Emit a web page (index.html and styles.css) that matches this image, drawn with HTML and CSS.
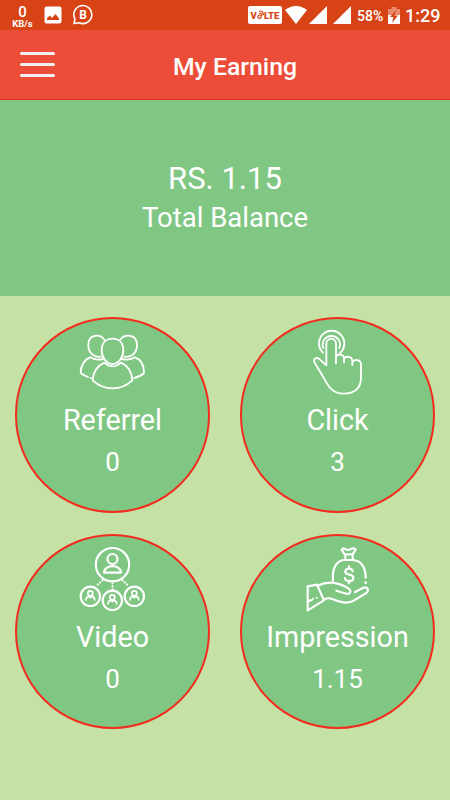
FILE: index.html
```
<!DOCTYPE html>
<html lang="en">
<head>
    <meta charset="UTF-8">
    <meta name="viewport" content="width=device-width, initial-scale=1.0">
    <title>My Earning</title>
    <link rel="stylesheet" href="styles.css">
</head>
<body>
    <div class="status-bar">
        <div class="speed"><b>0</b><span>KB/s</span></div>
        <svg class="picture" width="18" height="18" viewBox="0 0 18 18">
            <rect x="0.5" y="0.5" width="17" height="17" rx="2" fill="#fff"/>
            <path d="M3 14V12L6 9.500L8 12L11.500 8L15 12.500V14Z" fill="#d84315"/>
        </svg>
        <svg class="chat" width="22" height="22" viewBox="0 0 22 22">
            <path d="M2 19.500L3 15A9 9 0 1 1 7 18.700Z" fill="none" stroke="#fff" stroke-width="1.600" stroke-linejoin="round"/>
            <text x="11" y="14.700" text-anchor="middle" font-size="12" font-weight="700" fill="#fff">B</text>
        </svg>
        <div class="volte">V<svg width="7" height="10" viewBox="0 0 7 10"><circle cx="2.500" cy="6.700" r="1.700"/><path d="M2 3Q5 3 5 6M2 1Q6.500 1 6.500 5"/></svg>LTE</div>
        <svg class="signals" width="72" height="20" viewBox="0 0 72 20">
            <path d="M0 5Q11 -3 22 5L11 19Z" fill="#fff"/>
            <path d="M24 19L42 1V19ZM48 19L66 1V19Z" fill="#fff"/>
        </svg>
        <span class="percent">58%</span>
        <svg class="battery" width="12" height="19" viewBox="0 0 12 19">
            <path d="M0 3H3.500V1H8.500V3H12V9H0Z" fill="#e98a6c"/>
            <path d="M0 9H12V18H0Z" fill="#fff"/>
            <path d="M8 4L2 11H5.500L4 17L10 9.500H6.500Z" fill="#d84315"/>
        </svg>
        <span class="clock">1:29</span>
    </div>

    <header class="header">
        <button class="menu" aria-label="Menu"><i></i><i></i><i></i></button>
        <h1>My Earning</h1>
    </header>

    <section class="balance">
        <p class="amount">RS. 1.15</p>
        <p class="caption">Total Balance</p>
    </section>

    <main class="cards">
        <div class="card">
            <svg class="icon" viewBox="0 0 255 225">
                <path d="M103 44C91 27 55 25 55 60C55 83 72 99 92 95M151 44C163 27 201 25 201 60C201 83 184 99 164 95"/>
                <path d="M127.500 41C149 41 160 56 160 77C160 98 144 117 127.500 117C111 117 95 98 95 77C95 56 106 41 127.500 41Z"/>
                <path d="M61 97Q75 107 99 102M195 97Q181 107 155 102"/>
                <path d="M61 97C43 103 32 122 32 144Q42 152 54 156M195 97C213 103 222 122 222 144Q212 154 193 159"/>
                <path d="M103 113C85 121 70 139 68 166Q94 190 128 190Q161 190 187 166C185 139 171 121 153 113Q128 135 103 113Z"/>
                <circle class="dot" cx="62" cy="159" r="3"/>
            </svg>
            <h2>Referrel</h2>
            <p>0</p>
        </div>
        <div class="card">
            <svg class="icon" viewBox="-15 0 255 225">
                <path d="M79 121V56C79 37 108 37 108 56V115M108 98C110 84 132 86 132 101V112M132 103C134 91 157 93 157 108V120M157 112C163 101 183 103 183 118V157C183 190 163 206 130 206C98 206 84 183 72 160L44 113C38 101 49 95 59 103L79 121"/>
                <path d="M69 83A38 38 0 1 1 120 84"/>
                <path d="M70 69A26 26 0 1 1 118 69"/>
            </svg>
            <h2>Click</h2>
            <p>3</p>
        </div>
        <div class="card">
            <svg class="icon bold" viewBox="0 0 255 225">
                <circle cx="127.500" cy="74" r="50"/>
                <circle cx="127.500" cy="57" r="15"/>
                <path d="M102 98C102 72 153 72 153 98Z"/>
                <path class="dots" d="M97 121L80 137M127.500 130V151M158 121L175 137"/>
                <circle cx="61" cy="169" r="29"/>
                <circle cx="127" cy="181" r="29"/>
                <circle cx="193" cy="169" r="29"/>
                <g id="person" stroke-width="5">
                    <circle cx="61" cy="160" r="7.500"/>
                    <path d="M48 180Q48 170 57 169L61 173L65 169Q74 170 74 180"/>
                </g>
                <use href="#person" x="66" y="12"/>
                <use href="#person" x="132"/>
            </svg>
            <h2>Video</h2>
            <p>0</p>
        </div>
        <div class="card">
            <svg class="icon bold" viewBox="0 0 255 225">
                <path d="M149 43L140 29Q145 23 151 27Q159 33 167 27Q174 23 182 28L173 43ZM151 45V58M173 45V58"/>
                <path d="M114 122C110 82 127 60 149 60H173C199 61 212 83 212 113"/>
                <circle class="dot" cx="212" cy="128" r="4"/>
                <path d="M173 94C171 82 151 84 151 96C151 107 175 101 175 113C175 127 150 127 150 114M162 79V86M162 122V130"/>
                <path d="M38 139L66 134L87 181L38 211Z"/>
                <path d="M67 137C86 128 99 127 114 128C131 131 149 138 161 146C171 153 165 164 154 161L124 152M180 156L203 144C218 137 223 152 214 159L176 182C155 195 130 185 112 177Q101 172 87 178"/>
                <path d="M40 184L50 180"/>
                <circle class="dot" cx="54" cy="176" r="3"/>
                <circle class="dot" cx="65" cy="173" r="3"/>
            </svg>
            <h2>Impression</h2>
            <p>1.15</p>
        </div>
    </main>
</body>
</html>
```
FILE: styles.css
```
* {
    box-sizing: border-box;
}

body {
    margin: 0;
    height: 800px;
    overflow: hidden;
    font-family: Roboto, sans-serif;
    color: #fff;
    background-color: #c5e1a5;
}

h1, h2, p {
    margin: 0;
    font-weight: 400;
}

.status-bar {
    display: flex;
    align-items: center;
    height: 30px;
    padding: 0 10px 0 11px;
    background-color: #d84315;
}

.speed {
    display: flex;
    flex-direction: column;
    align-items: center;
    width: 23px;
    padding-top: 3px;
    font-size: 9.5px;
    font-weight: 700;
    line-height: 8px;
}

.speed b {
    font-size: 15px;
    font-weight: 500;
    line-height: 15px;
}

.picture {
    margin-left: 10px;
}

.chat {
    margin-left: 10px;
}

.volte {
    display: flex;
    align-items: center;
    justify-content: center;
    width: 34px;
    height: 18px;
    margin-left: auto;
    border-radius: 2px;
    background-color: #fff;
    color: #d84315;
    font-size: 9.5px;
    font-weight: 900;
}

.volte svg {
    fill: none;
    stroke: #d84315;
    stroke-width: 1.2;
}

.signals {
    margin-left: 3px;
}

.percent {
    width: 28px;
    padding-top: 1px;
    font-size: 14px;
    font-weight: 500;
}

.battery {
    margin-left: 3px;
}

.clock {
    width: 35px;
    margin-left: 5px;
    font-size: 18px;
    font-weight: 500;
}

.header {
    display: grid;
    grid-template-columns: 75px 1fr 55px;
    align-items: center;
    height: 70px;
    border-bottom: 1px solid #e52d27;
    background-color: #eb4d38;
}

.header h1 {
    padding-top: 3px;
    text-align: center;
    font-size: 24.8px;
    font-weight: 500;
}

.menu {
    display: flex;
    flex-direction: column;
    gap: 8px;
    margin-left: 20px;
    padding: 0;
    width: 35px;
    border: 0;
    background: none;
}

.menu i {
    width: 35px;
    height: 3px;
    border-radius: 2px;
    background-color: #f0f0f0;
}

.balance {
    height: 196px;
    padding-top: 59px;
    text-align: center;
    background-color: #81c784;
}

.amount {
    font-size: 31px;
    line-height: 40px;
}

.caption {
    font-size: 27.5px;
    line-height: 37px;
}

.cards {
    display: grid;
    grid-template-columns: 1fr 1fr;
    justify-items: center;
    row-gap: 21px;
    padding-top: 21px;
}

.card {
    display: flex;
    flex-direction: column;
    align-items: center;
    width: 195.5px;
    height: 195.5px;
    padding-top: 6px;
    border: 2px solid #f32c1e;
    border-radius: 50%;
    background-color: #81c784;
}

.card h2 {
    margin-top: 2px;
    font-size: 28.7px;
    line-height: 36px;
}

.card p {
    margin-top: 6px;
    font-size: 26px;
    line-height: 37px;
}

.icon {
    width: 85px;
    height: 75px;
    flex-shrink: 0;
    fill: none;
    stroke: #fff;
    stroke-width: 5.5;
    stroke-linecap: round;
    stroke-linejoin: round;
}

.bold {
    margin: -1.5px 0 1.5px;
    stroke-width: 6.5;
}

.dot {
    fill: #fff;
    stroke: none;
}

.dots {
    stroke-dasharray: 0.1 9;
}
```
